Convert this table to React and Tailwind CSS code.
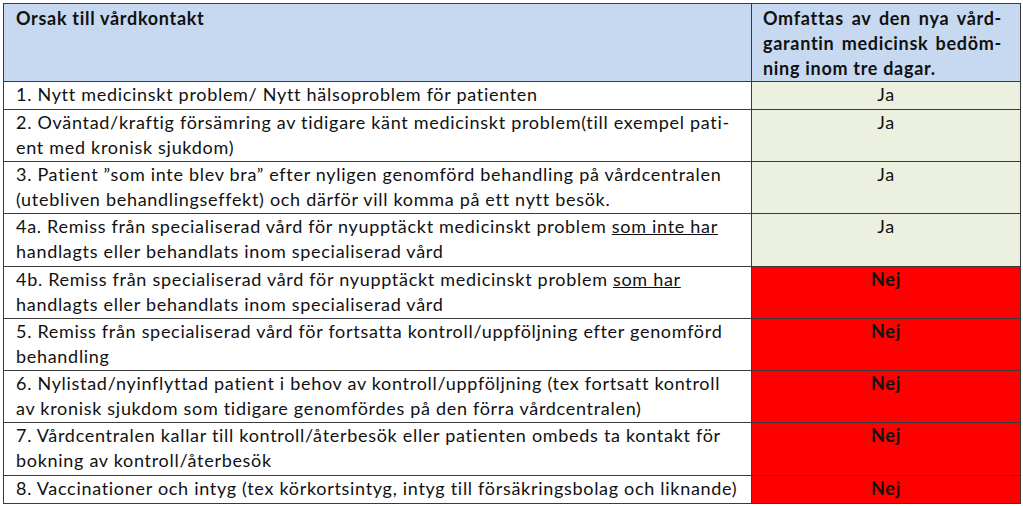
import React from 'react'

const rows = [
    { h: 'h-[28px]', ok: true, lines: ['1. Nytt medicinskt problem/ Nytt hälsoproblem för patienten'] },
    { h: 'h-[52px]', ok: true, lines: ['2. Oväntad/kraftig försämring av tidigare känt medicinskt problem(till exempel pati-', 'ent med kronisk sjukdom)'] },
    { h: 'h-[52px]', ok: true, lines: ['3. Patient ”som inte blev bra” efter nyligen genomförd behandling på vårdcentralen', '(utebliven behandlingseffekt) och därför vill komma på ett nytt besök.'] },
    { h: 'h-[53px]', ok: true, lines: [<>4a. Remiss från specialiserad vård för nyupptäckt medicinskt problem <u>som inte har</u></>, 'handlagts eller behandlats inom specialiserad vård'] },
    { h: 'h-[52px]', ok: false, lines: [<>4b. Remiss från specialiserad vård för nyupptäckt medicinskt problem <u>som har</u></>, 'handlagts eller behandlats inom specialiserad vård'] },
    { h: 'h-[52px]', ok: false, lines: ['5. Remiss från specialiserad vård för fortsatta kontroll/uppföljning efter genomförd', 'behandling'] },
    { h: 'h-[52px]', ok: false, lines: ['6. Nylistad/nyinflyttad patient i behov av kontroll/uppföljning (tex fortsatt kontroll', 'av kronisk sjukdom som tidigare genomfördes på den förra vårdcentralen)'] },
    { h: 'h-[53px]', ok: false, lines: ['7. Vårdcentralen kallar till kontroll/återbesök eller patienten ombeds ta kontakt för', 'bokning av kontroll/återbesök'] },
    { h: 'h-[28px]', ok: false, lines: ['8. Vaccinationer och intyg (tex körkortsintyg, intyg till försäkringsbolag och liknande)'] },
]

export default function App() {
    return (
        <div className="w-[1023px] h-[506px] bg-white pt-[3px] pl-[3px] overflow-hidden text-[18px] leading-[25px] tracking-[0.7px] text-[#111]" style={{ fontFamily: 'Lato, "Open Sans", sans-serif' }}>
            <table className="w-[1017px] border-collapse table-fixed">
                <colgroup>
                    <col className="w-[748px]" />
                    <col className="w-[269px]" />
                </colgroup>
                <thead>
                    {/* header row */}
                    <tr className="h-[78px] bg-[#c6d9f1]">
                        <th className="border border-[#3a3a3a] align-top text-left font-bold pl-[12px] pt-[2px]">Orsak till vårdkontakt</th>
                        <th className="border border-[#3a3a3a] align-top text-left font-bold pl-[11px] pr-[18px] pt-[2px]">
                            <div className="text-justify [text-align-last:justify]">Omfattas av den nya vård-</div>
                            <div className="text-justify [text-align-last:justify]">garantin medicinsk bedöm-</div>
                            <div>ning inom tre dagar.</div>
                        </th>
                    </tr>
                </thead>
                <tbody>
                    {rows.map((row, i) => (
                        <tr key={i} className={row.h}>
                            <td className="border border-[#3a3a3a] align-top pl-[12px] p-0 whitespace-nowrap">
                                {row.lines.map((line, j) => <div key={j}>{line}</div>)}
                            </td>
                            {row.ok
                                ? <td className="border border-[#3a3a3a] align-top text-center p-0 bg-[#ebf1de]">Ja</td>
                                : <td className="border border-[#3a3a3a] align-top text-center p-0 bg-[#ff0000] font-bold">Nej</td>}
                        </tr>
                    ))}
                </tbody>
            </table>
        </div>
    )
}
